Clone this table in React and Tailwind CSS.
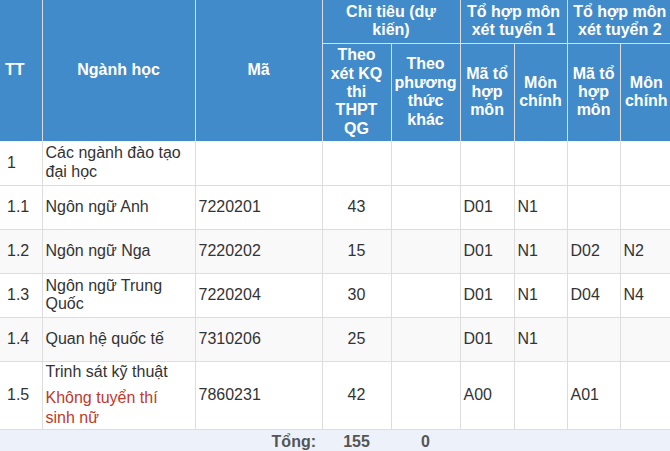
const rows = [
  { tt: "1", name: "Các ngành đào tạo đại học", code: "", a: "", b: "", c1: "", m1: "", c2: "", m2: "", h: "h-[44px]" },
  { tt: "1.1", name: "Ngôn ngữ Anh", code: "7220201", a: "43", b: "", c1: "D01", m1: "N1", c2: "", m2: "", h: "h-[44px]" },
  { tt: "1.2", name: "Ngôn ngữ Nga", code: "7220202", a: "15", b: "", c1: "D01", m1: "N1", c2: "D02", m2: "N2", h: "h-[44px]", stripe: true },
  { tt: "1.3", name: "Ngôn ngữ Trung Quốc", code: "7220204", a: "30", b: "", c1: "D01", m1: "N1", c2: "D04", m2: "N4", h: "h-[44px]" },
  { tt: "1.4", name: "Quan hệ quốc tế", code: "7310206", a: "25", b: "", c1: "D01", m1: "N1", c2: "", m2: "", h: "h-[44px]", stripe: true },
  { tt: "1.5", name: "Trinh sát kỹ thuật", note: true, code: "7860231", a: "42", b: "", c1: "A00", m1: "", c2: "A01", m2: "", h: "h-[66px]" },
];

const th = "bg-[#428bca] text-white font-bold text-center align-middle px-[2px] border-r border-[#dddddd]";
const td = "border-r border-b border-[#dddddd] align-middle px-[3px] py-[1px]";

export default function App() {
  return (
    <div
      className="w-[670px] h-[451px] overflow-hidden bg-white text-[#333333] text-[16px] leading-[1.15]"
      style={{ fontFamily: '"Liberation Sans", Arial, sans-serif' }}
    >
      <table className="w-[672px] table-fixed border-collapse">
        <colgroup>
          <col className="w-[42px]" />
          <col className="w-[153px]" />
          <col className="w-[127px]" />
          <col className="w-[69px]" />
          <col className="w-[69px]" />
          <col className="w-[54px]" />
          <col className="w-[53px]" />
          <col className="w-[53px]" />
          <col className="w-[52px]" />
        </colgroup>
        <thead>
          <tr className="h-[43px]">
            <th rowSpan={2} className={th + " text-left pl-[5px]"}>TT</th>
            <th rowSpan={2} className={th}>Ngành học</th>
            <th rowSpan={2} className={th}>Mã</th>
            <th colSpan={2} className={th + " border-b"}>Chỉ tiêu (dự<br />kiến)</th>
            <th colSpan={2} className={th + " border-b"}>Tổ hợp môn<br />xét tuyển 1</th>
            <th colSpan={2} className={th + " border-b border-r-0"}>Tổ hợp môn<br />xét tuyển 2</th>
          </tr>
          <tr className="h-[98px]">
            <th className={th}>Theo<br />xét KQ<br />thi<br />THPT<br />QG</th>
            <th className={th}>Theo<br />phương<br />thức<br />khác</th>
            <th className={th}>Mã tổ<br />hợp<br />môn</th>
            <th className={th}>Môn<br />chính</th>
            <th className={th}>Mã tổ<br />hợp<br />môn</th>
            <th className={th + " border-r-0"}>Môn<br />chính</th>
          </tr>
        </thead>
        <tbody>
          {rows.map((r, i) => (
            <tr key={i} className={(r.stripe ? "bg-[#f9f9f9] " : "bg-white ") + r.h}>
              <td className={td + " pl-[7px]"}>{r.tt}</td>
              <td className={td}>
                {r.name}
                {r.note && (
                  <div className="mt-[7px] leading-[20px] text-[#c0392b]">
                    Không tuyển thí<br />sinh nữ
                  </div>
                )}
              </td>
              <td className={td}>{r.code}</td>
              <td className={td + " text-center"}>{r.a}</td>
              <td className={td + " text-center"}>{r.b}</td>
              <td className={td}>{r.c1}</td>
              <td className={td}>{r.m1}</td>
              <td className={td}>{r.c2}</td>
              <td className={td + " border-r-0"}>{r.m2}</td>
            </tr>
          ))}
        </tbody>
        <tfoot>
          <tr className="h-[26px] bg-[#edf2fa] font-bold text-[#555555]">
            <td colSpan={3} className="text-right pr-[6px]">Tổng:</td>
            <td className="text-center">155</td>
            <td className="text-center">0</td>
            <td colSpan={4}></td>
          </tr>
        </tfoot>
      </table>
    </div>
  );
}
